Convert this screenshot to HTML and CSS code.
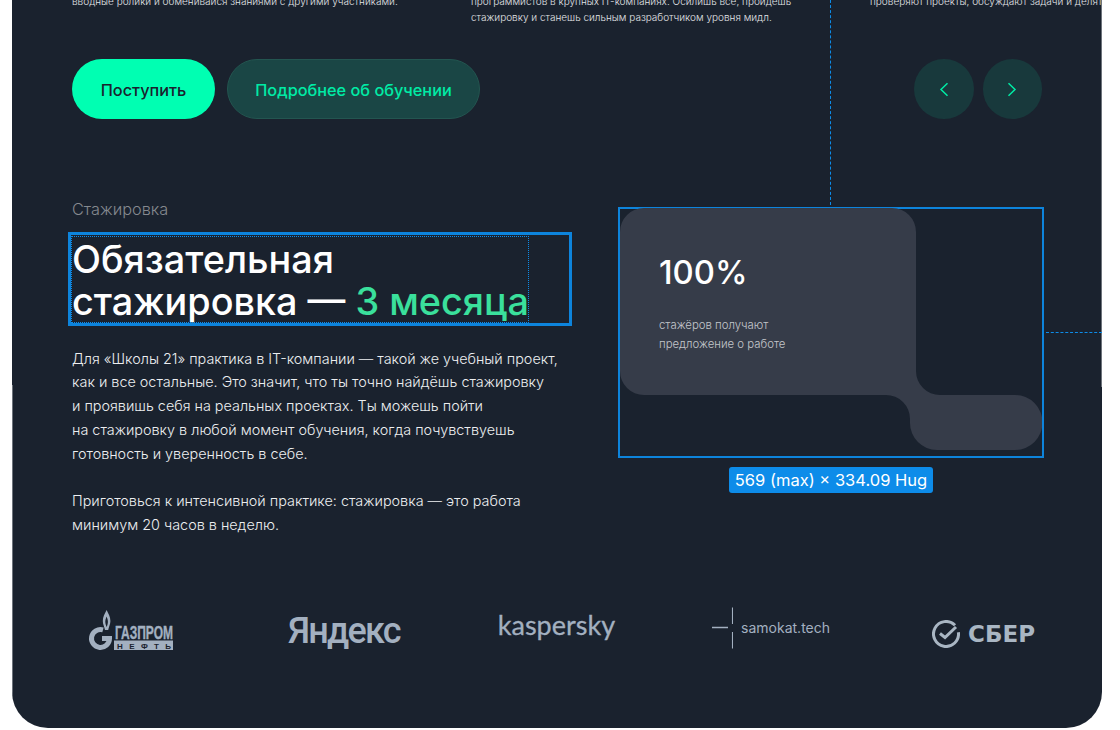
FILE: index.html
```html
<!DOCTYPE html>
<html lang="ru">
<head>
<meta charset="utf-8">
<title>Школа 21</title>
<link rel="stylesheet" href="styles.css">
</head>
<body>
<main class="card">
  <span class="guide-v"></span>
  <div class="top-row">
    <p class="top-text">вводные ролики и обменивайся знаниями с другими участниками.</p>
    <p class="top-text">программистов в крупных IT-компаниях. Осилишь всё, пройдёшь<br>стажировку и станешь сильным разработчиком уровня мидл.</p>
    <p class="top-text">проверяют проекты, обсуждают задачи и делятся</p>
  </div>
  <div class="actions">
    <a class="btn btn-primary">Поступить</a>
    <a class="btn btn-secondary">Подробнее об обучении</a>
    <div class="nav">
      <button class="nav-btn" aria-label="Назад"><svg width="10" height="15" viewBox="0 0 10 15"><path d="M8.500 1.200 2 7.500l6.500 6.300"/></svg></button>
      <button class="nav-btn" aria-label="Вперёд"><svg width="10" height="15" viewBox="0 0 10 15"><path d="M1.500 1.200 8 7.500l-6.500 6.300"/></svg></button>
    </div>
  </div>
  <section class="internship">
    <div class="info">
      <div class="eyebrow">Стажировка</div>
      <h2 class="title">Обязательная<br>стажировка — <span class="accent">3 месяца</span></h2>
      <p class="body-text">Для «Школы 21» практика в IT-компании — такой же учебный проект,<br>как и все остальные. Это значит, что ты точно найдёшь стажировку<br>и проявишь себя на реальных проектах. Ты можешь пойти<br>на стажировку в любой момент обучения, когда почувствуешь<br>готовность и уверенность в себе.</p>
      <p class="body-text body-gap">Приготовься к интенсивной практике: стажировка — это работа<br>минимум 20 часов в неделю.</p>
    </div>
    <div class="frame">
      <svg class="blob" width="422" height="242" viewBox="0 0 422 242"><path d="M24 0H272A24 24 0 0 1 296 24V163A24 24 0 0 0 320 187H395A27.500 27.500 0 0 1 395 242H317A27 27 0 0 1 290 215V211A24 24 0 0 0 266 187H24A24 24 0 0 1 0 163V24A24 24 0 0 1 24 0Z"/></svg>
      <div class="stat">
        <div class="stat-num">100%</div>
        <div class="stat-text">стажёров получают<br>предложение о работе</div>
      </div>
      <span class="guide-h"></span>
      <span class="size-tag">569 (max) × 334.09 Hug</span>
    </div>
  </section>
  <div class="logos">
    <svg class="logo-gazprom" width="86" height="42" viewBox="0 0 86 42">
      <path class="gz-fill" d="M18.600 1c-1.800 3.600-3.800 7-3.800 11 0 3 1.400 5.600 2.200 9h3.200c.8-3.400 2.200-6 2.200-9 0-4-2-7.400-3.800-11Zm0 6.500c.8 2 1.300 3.400 1.300 5.300 0 1.800-.6 3.500-1.200 5.200-.7-1.700-1.400-3.400-1.400-5.200 0-1.900.5-3.300 1.300-5.300Z"/>
      <path class="gz-stroke" d="M15 20.800A9 9 0 1 0 21.500 29.500H14"/>
      <text class="gz-name" x="27" y="30" textLength="58" lengthAdjust="spacingAndGlyphs">ГАЗПРОМ</text>
      <rect class="gz-fill" x="26" y="31.500" width="59" height="9.500"/>
      <text class="gz-sub" x="29" y="39.500" textLength="54">НЕФТЬ</text>
    </svg>
    <span class="logo-yandex">Яндекс</span>
    <span class="logo-kaspersky">kaspersky</span>
    <span class="logo-samokat">
      <svg width="21" height="42" viewBox="0 0 21 42"><path d="M0 20.500H16M20.700 .5V17M20.700 25V41.500"/></svg>
      <span class="samokat-name">samokat.tech</span>
    </span>
    <span class="logo-sber">
      <svg width="28" height="28" viewBox="0 0 28 28"><path d="M23 5.300A12.500 12.500 0 1 0 26.400 12.300"/><path d="M8 13.500l5 4L24 7"/></svg>
      <span class="sber-name">СБЕР</span>
    </span>
  </div>
</main>
</body>
</html>
```
FILE: styles.css
```css
* { box-sizing: border-box; }
html, body { margin: 0; height: 730px; overflow: hidden; background: #fff; }
body { font-family: Inter, "Noto Sans", sans-serif; }

.card {
  position: relative;
  width: 1090px;
  height: 728px;
  margin-left: 12px;
  padding-left: 60px;
  background: #1a222e;
  border-radius: 0 0 36px 36px;
  overflow: hidden;
}
.card::before {
  content: "";
  position: absolute;
  right: 0;
  top: 0;
  height: 387px;
  border-right: 1px solid #6d737b;
}
.card::after {
  content: "";
  position: absolute;
  left: 0;
  top: 385px;
  height: 310px;
  border-left: 1px solid #6d737b;
}
.guide-v {
  position: absolute;
  left: 818px;
  top: 0;
  height: 205px;
  border-left: 1px dashed #0d8ce9;
}

.top-row {
  display: grid;
  grid-template-columns: 399px 399px 232px;
  height: 32px;
  margin-top: -7px;
}
.top-text {
  margin: 0;
  font-size: 10px;
  line-height: 16px;
  font-weight: 300;
  color: #e3e5e8;
  white-space: nowrap;
  overflow: hidden;
}

.actions {
  display: flex;
  align-items: center;
  gap: 12px;
  height: 60px;
  margin-top: 34px;
  padding-right: 60px;
}
.btn {
  display: flex;
  align-items: center;
  justify-content: center;
  height: 60px;
  padding-top: 1px;
  border-radius: 30px;
  font-size: 16.300px;
  font-weight: 500;
}
.btn-primary { width: 143px; background: #00ffb2; color: #1a222e; }
.btn-secondary { width: 253px; background: #1a4645; border: 1px solid #235550; color: #00eba5; }
.nav { display: flex; gap: 9px; margin-left: auto; }
.nav-btn {
  display: flex;
  align-items: center;
  justify-content: center;
  width: 59.500px;
  height: 60px;
  padding: 0;
  border: 0;
  border-radius: 50%;
  background: #18393c;
}
.nav-btn path { fill: none; stroke: #00eba5; stroke-width: 1.500; }

.internship { display: flex; margin-top: 80px; }
.info { width: 546px; flex: none; }
.eyebrow { font-size: 16.300px; line-height: 20px; font-weight: 300; color: #85898f; }
.title {
  position: relative;
  width: 456px;
  margin: 19px 0 0;
  font-size: 37.800px;
  line-height: 42px;
  font-weight: 500;
  color: #fff;
  white-space: nowrap;
}
.title::before {
  content: "";
  position: absolute;
  inset: -6px -44px -4px -4px;
  border: 3px solid #0d84dc;
}
.title::after {
  content: "";
  position: absolute;
  inset: -2px -1px -1px -1px;
  border: 1px dotted #0d8ce9;
}
.accent { color: #3ae09c; }
.body-text {
  margin: 24.500px 0 0;
  font-size: 14.400px;
  line-height: 23.800px;
  font-weight: 300;
  color: #eceef0;
  white-space: nowrap;
}
.body-gap { margin-top: 23.800px; }

.frame {
  position: relative;
  display: grid;
  width: 426px;
  height: 251px;
  margin-top: 8px;
  border: 2px solid #0d84dc;
}
.blob { grid-area: 1 / 1; margin-top: -1px; }
.blob path { fill: #363c49; }
.stat { grid-area: 1 / 1; padding: 43px 0 0 39px; }
.stat-num { font-size: 32.800px; line-height: 40px; font-weight: 500; color: #fff; }
.stat-text { margin-top: 24px; font-size: 11.400px; line-height: 19px; font-weight: 300; color: #c3c6cb; }
.guide-h {
  position: absolute;
  left: 426px;
  top: 123px;
  width: 56px;
  border-top: 1px dashed #0d8ce9;
}
.size-tag {
  position: absolute;
  left: 109px;
  top: 258px;
  width: 204px;
  height: 26px;
  border-radius: 3px;
  background: #0d8ce9;
  color: #fff;
  font-size: 16.500px;
  line-height: 26px;
  text-align: center;
  white-space: nowrap;
}

.logos {
  display: flex;
  align-items: center;
  height: 48px;
  margin-top: 69px;
  padding-left: 16px;
  color: #a3b0c0;
}
.logo-gazprom { flex: none; }
.gz-fill { fill: #a3b0c0; }
.gz-stroke { fill: none; stroke: #a3b0c0; stroke-width: 5; }
.gz-name { fill: #a3b0c0; stroke: #a3b0c0; stroke-width: .4; font-family: "Liberation Sans", sans-serif; font-size: 19px; font-weight: 700; }
.gz-sub { fill: #1a222e; font-family: "Liberation Sans", sans-serif; font-size: 8px; font-weight: 700; }
.logo-yandex {
  margin-left: 114px;
  margin-top: 3px;
  font-family: Roboto, sans-serif;
  font-size: 36px;
  font-weight: 500;
  letter-spacing: -1.800px;
  line-height: 48px;
}
.logo-kaspersky {
  margin-left: 98px;
  margin-top: -9px;
  font-family: Lato, sans-serif;
  font-size: 27px;
  line-height: 48px;
  -webkit-text-stroke: .3px #a3b0c0;
}
.logo-samokat { display: flex; align-items: center; gap: 8px; margin-left: 97px; margin-top: -4px; }
.logo-samokat path { fill: none; stroke: #a3b0c0; stroke-width: 1.500; }
.samokat-name { font-size: 14px; font-weight: 400; }
.logo-sber { display: flex; align-items: center; gap: 8px; margin-left: 102px; margin-top: 8px; }
.logo-sber path { fill: none; stroke: #a9b6c3; stroke-width: 3; }
.sber-name { font-family: "DejaVu Sans", sans-serif; font-size: 23px; font-weight: 700; color: #a9b6c3; }
```
